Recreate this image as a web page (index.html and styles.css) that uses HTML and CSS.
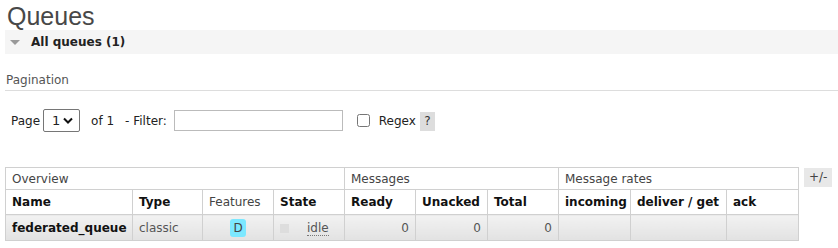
FILE: index.html
```html
<!DOCTYPE html>
<html>
<head>
    <link rel="stylesheet" href="styles.css">
</head>
<body>
    <div class="main">
        <h1>Queues</h1>
        <div class="section">
            <h2 class="section-head"><span class="arrow"></span>All queues (1)</h2>
            <h3 class="sub-head">Pagination</h3>
            <div class="pagination">
                <span class="lbl-page">Page</span>
                <span class="select-wrap">
                    <select class="page-select">
                        <option>1</option>
                    </select>
                    <svg class="chevron" width="10" height="7" viewBox="0 0 10 7"><path d="M1 1.5 L5 5.5 L9 1.5" fill="none" stroke="#111" stroke-width="2"/></svg>
                </span>
                <span class="lbl-of">of 1</span>
                <span class="lbl-filter">- Filter:</span>
                <input type="text" class="filter-input">
                <input type="checkbox" class="regex-box">
                <span class="lbl-regex">Regex</span>
                <span class="help">?</span>
            </div>
            <div class="table-row">
                <table class="list">
                    <colgroup>
                        <col class="c-name"><col class="c-type"><col class="c-feat"><col class="c-state">
                        <col class="c-ready"><col class="c-unacked"><col class="c-total">
                        <col class="c-in"><col class="c-deliver"><col class="c-ack">
                    </colgroup>
                    <thead>
                        <tr class="group-row">
                            <th colspan="4">Overview</th>
                            <th colspan="3">Messages</th>
                            <th colspan="3">Message rates</th>
                        </tr>
                        <tr class="col-row">
                            <th>Name</th>
                            <th>Type</th>
                            <th class="plain">Features</th>
                            <th>State</th>
                            <th>Ready</th>
                            <th>Unacked</th>
                            <th>Total</th>
                            <th>incoming</th>
                            <th>deliver / get</th>
                            <th>ack</th>
                        </tr>
                    </thead>
                    <tbody>
                        <tr class="data-row">
                            <td class="name">federated_queue</td>
                            <td class="muted">classic</td>
                            <td class="center"><span class="badge">D</span></td>
                            <td class="state"><span class="state-key"></span><abbr title="Idle">idle</abbr></td>
                            <td class="num">0</td>
                            <td class="num">0</td>
                            <td class="num">0</td>
                            <td></td>
                            <td></td>
                            <td></td>
                        </tr>
                    </tbody>
                </table>
                <span class="toggle">+/-</span>
            </div>
        </div>
    </div>
</body>
</html>
```

FILE: styles.css
```css
/* page */
body {
    margin: 0;
    font-family: "DejaVu Sans", Verdana, sans-serif;
    font-size: 12px;
    color: #484848;
    background: #fff;
}

.main {
    padding-left: 5px;
}

h1 {
    margin: 0;
    padding: 2px 0 0 2px;
    font-family: "Liberation Sans", Arial, sans-serif;
    font-size: 25px;
    font-weight: normal;
    line-height: 28px;
    color: #484848;
}

.section-head {
    display: flex;
    align-items: center;
    height: 24px;
    margin: 0;
    background: #f5f5f5;
    font-size: 12px;
    font-weight: bold;
    color: #222;
}

.arrow {
    width: 0;
    height: 0;
    border-left: 5px solid transparent;
    border-right: 5px solid transparent;
    border-top: 5px solid #999;
    margin: 0 11px 0 5px;
}

.sub-head {
    margin: 0;
    padding: 17px 0 0 1px;
    height: 19px;
    line-height: 19px;
    border-bottom: 1px solid #ddd;
    font-size: 12px;
    font-weight: normal;
    color: #555;
}

/* pagination */
.pagination {
    display: flex;
    align-items: center;
    height: 23px;
    margin-top: 18px;
    padding-left: 6px;
    color: #222;
}

.select-wrap {
    position: relative;
    margin-left: 3px;
}

.page-select {
    appearance: none;
    width: 37px;
    height: 23px;
    margin: 0;
    padding: 0 0 0 8px;
    border: 1px solid #767676;
    border-radius: 2px;
    background: #fff;
    font-family: inherit;
    font-size: 13px;
    color: #222;
}

.chevron {
    position: absolute;
    right: 7px;
    top: 8px;
    pointer-events: none;
}

.lbl-of {
    margin-left: 11px;
}

.lbl-filter {
    margin-left: 11px;
}

.filter-input {
    width: 165px;
    height: 19px;
    margin: 0 0 0 7px;
    padding: 0 1px;
    border: 1px solid #bbb;
}

.regex-box {
    width: 13px;
    height: 13px;
    margin: 0 0 0 14px;
}

.lbl-regex {
    margin-left: 9px;
}

.help {
    width: 15px;
    height: 19px;
    margin: 2px 0 0 4px;
    background: #ddd;
    text-align: center;
    line-height: 19px;
    color: #333;
}

/* table */
.table-row {
    display: flex;
    align-items: flex-start;
    margin-top: 35px;
}

.list {
    border-collapse: collapse;
    table-layout: fixed;
    width: 793px;
}

.c-name { width: 127px; }
.c-type { width: 70px; }
.c-feat { width: 71px; }
.c-state { width: 71px; }
.c-ready { width: 71px; }
.c-unacked { width: 72px; }
.c-total { width: 71px; }
.c-in { width: 72px; }
.c-deliver { width: 96px; }
.c-ack { width: 72px; }

.list th,
.list td {
    border: 1px solid #d0d0d0;
    padding: 0 6px;
    text-align: left;
    white-space: nowrap;
    overflow: hidden;
}

.group-row th {
    height: 21px;
    font-weight: normal;
    color: #444;
}

.col-row th {
    height: 24px;
    font-weight: bold;
    color: #111;
}

.col-row th.plain {
    font-weight: normal;
    color: #444;
}

.data-row td {
    height: 25px;
    background: linear-gradient(#f2f2f2, #e2e2e2);
    color: #555;
}

.data-row td.name {
    font-weight: bold;
    color: #111;
}

.data-row td.num {
    text-align: right;
}

.data-row td.center {
    text-align: center;
}

.badge {
    display: inline-block;
    width: 16px;
    height: 18px;
    line-height: 19px;
    border-radius: 3px;
    background: #7ce8ff;
    color: #444;
    text-align: center;
    vertical-align: middle;
}

.state-key {
    display: inline-block;
    width: 9px;
    height: 9px;
    margin-right: 18px;
    background: #ddd;
    vertical-align: middle;
}

abbr {
    text-decoration: none;
    border-bottom: 1px dotted #777;
    color: #555;
}

.toggle {
    margin: 1px 0 0 5px;
    padding: 0 5px;
    height: 19px;
    line-height: 19px;
    background: #e8e8e8;
    color: #444;
}
```
